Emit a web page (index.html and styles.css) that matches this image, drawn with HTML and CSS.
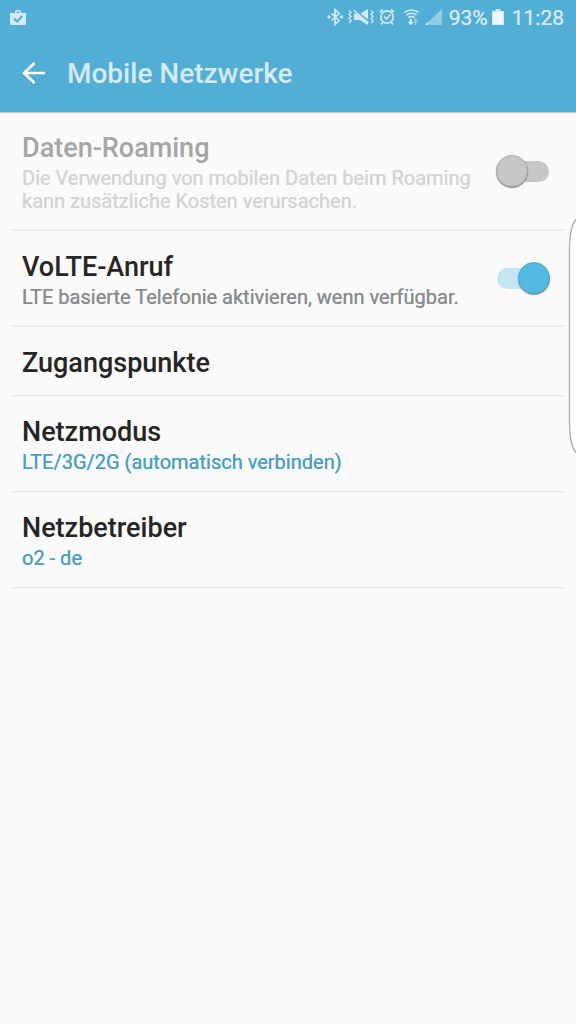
FILE: index.html
```html
<!DOCTYPE html>
<html lang="de">
<head>
<meta charset="utf-8">
<meta name="viewport" content="width=device-width, initial-scale=1">
<title>Mobile Netzwerke</title>
<link rel="stylesheet" href="styles.css">
</head>
<body>
<header class="top">
  <div class="status">
    <svg class="bag" width="18" height="18" viewBox="0 0 18 18" aria-hidden="true">
      <path class="ink" fill-rule="evenodd" d="M1 4h5V2.500Q6 1 7.500 1h3Q12 1 12 2.500V4h5v10.500q0 1.500-1.500 1.500h-13Q1 16 1 14.500zM7.500 2.500V4h3V2.500z"/>
      <path class="check" d="M5 9.500l3 3 5.500-5.500"/>
    </svg>
    <div class="status-right">
      <svg class="icons" width="122" height="20" viewBox="0 0 122 20" aria-hidden="true">
        <path class="line" d="M4.500 6.500l7.500 7-4 4V2.500l4 4-7.500 7"/>
        <path class="ink" d="M0 10l2-2 2 2-2 2zM12.500 10l2-2 2 2-2 2z"/>
        <path class="line thin" d="M22 3.500l2 2-2 2 2 2-2 2 2 2-1.500 2.500M44 3.500l2 2-2 2 2 2-2 2 2 2-1.500 2.500"/>
        <path class="ink" d="M27 6.500h3.500l10.500 8.500v3l-8.500-5H27zM33.500 6.500L41 2v10.500z"/>
        <path class="line thin" d="M26.500 3l15 13"/>
        <circle class="line" cx="60" cy="10" r="6.200"/>
        <path class="line" d="M57 9.500l2.500 2.500 4-4.500M53 5l3-2.500M67 5l-3-2.500M56 15l-2 2.500M64 15l2 2.500"/>
        <path class="line" d="M77.500 5.500q7-5 14 0M79.500 8q5-3.500 10 0M81.500 10.500q3-2 6 0"/>
        <path class="ink" d="M82.500 12h2.500v3h1.500l-2.750 3.500L81 15h1.500z"/>
        <path class="ink faint" d="M87.500 18v-3.500H86l2.500-3.500 2.500 3.500h-1.500V18z"/>
        <path class="ink faint" d="M98 18L115 2v16z"/>
        <path class="ink" d="M98 18l3-3v3z"/>
      </svg>
      <span class="charge">93%</span>
      <svg class="battery" width="12" height="18" viewBox="0 0 12 18" aria-hidden="true">
        <path class="ink" d="M3.500 1h5v2H12v14H0V3h3.500z"/>
        <path class="fill" d="M1 4h10v12H1z"/>
      </svg>
      <time class="clock">11:28</time>
    </div>
  </div>
  <div class="bar">
    <button class="back" type="button" aria-label="Zurück">
      <svg width="24" height="24" viewBox="0 0 24 24" aria-hidden="true"><path d="M12.500 1L2 11l10.500 10M2 11h21"/></svg>
    </button>
    <h1 class="heading">Mobile Netzwerke</h1>
  </div>
</header>
<main class="list">
  <div class="row soft disabled">
    <label class="text" for="roaming">
      <span class="name">Daten-Roaming</span>
      <span class="note">Die Verwendung von mobilen Daten beim Roaming kann zusätzliche Kosten verursachen.</span>
    </label>
    <input class="switch" id="roaming" type="checkbox" role="switch" disabled>
  </div>
  <div class="row soft">
    <label class="text" for="volte">
      <span class="name">VoLTE-Anruf</span>
      <span class="note">LTE basierte Telefonie aktivieren, wenn verfügbar.</span>
    </label>
    <input class="switch" id="volte" type="checkbox" role="switch" checked>
  </div>
  <button class="row single" type="button">
    <span class="text"><span class="name">Zugangspunkte</span></span>
  </button>
  <button class="row" type="button">
    <span class="text"><span class="name">Netzmodus</span><span class="note value">LTE/3G/2G (automatisch verbinden)</span></span>
  </button>
  <button class="row" type="button">
    <span class="text"><span class="name">Netzbetreiber</span><span class="note value">o2 - de</span></span>
  </button>
</main>
<button class="edge" type="button" aria-label="Seitenleiste">
  <svg width="8" height="236" viewBox="0 0 8 236" aria-hidden="true"><path d="M8.500 1Q1.500 8 1.500 32V204Q1.500 228 8.500 235"/></svg>
</button>
</body>
</html>
```
FILE: styles.css
```css
*,
*::before,
*::after {
  box-sizing: border-box;
}

body {
  margin: 0;
  min-height: 100vh;
  position: relative;
  background: #fafafa;
  color: #252525;
  font-family: Roboto, "Liberation Sans", sans-serif;
  font-weight: 500;
}

button {
  border: 0;
  padding: 0;
  background: none;
  font: inherit;
  color: inherit;
  text-align: left;
}

svg {
  display: block;
}

.top {
  background: #52aed5;
  color: #d5eaf3;
  box-shadow: 0 1px 1px #c4c4c4;
}

.status {
  display: flex;
  justify-content: space-between;
  align-items: center;
  height: 36px;
  padding: 0 12px 0 9px;
}

.status-right {
  display: flex;
  align-items: center;
  font-size: 21px;
  font-weight: 400;
  line-height: 36px;
  text-shadow: 0 0 currentColor;
}

.icons {
  margin-bottom: 2px;
}

.battery {
  margin: 0 8px 2px 4px;
}

.ink {
  fill: #d5eaf3;
}

.fill {
  fill: #eef4f7;
}

.faint {
  opacity: 0.5;
}

.line {
  fill: none;
  stroke: #d5eaf3;
  stroke-width: 1.7;
}

.thin {
  stroke-width: 1.3;
}

.check {
  fill: none;
  stroke: #52aed5;
  stroke-width: 2;
}

.bar {
  display: flex;
  align-items: center;
  gap: 21px;
  height: 76px;
  padding: 0 22px;
}

.back path {
  fill: none;
  stroke: #fff;
  stroke-width: 2.6;
}

.heading {
  margin: 0;
  font-size: 28px;
  font-weight: 500;
  line-height: 32px;
}

.list {
  padding: 0 13px;
}

.row {
  display: flex;
  align-items: center;
  gap: 20px;
  width: 100%;
  padding: 20px 12px 17px 9px;
  border-bottom: 1px solid #dedede;
}

.soft {
  padding-bottom: 16px;
  border-bottom: 2px solid #ececec;
}

.single {
  padding-bottom: 16px;
}

.text {
  display: flex;
  flex: 1;
  flex-direction: column;
  gap: 3px;
}

.name {
  font-size: 27px;
  line-height: 32px;
}

.note {
  color: #898c8e;
  font-size: 20px;
  font-weight: 400;
  line-height: 23px;
  text-shadow: 0 0 currentColor;
}

.value {
  color: #4aa1c3;
}

.disabled .name {
  color: #a5a6a6;
}

.disabled .note {
  color: #d3d4d4;
}

.switch {
  appearance: none;
  display: flex;
  align-items: center;
  flex: none;
  position: relative;
  isolation: isolate;
  width: 54px;
  height: 32px;
  margin: 0 1px 4px 0;
}

.switch::before {
  content: "";
  width: 32px;
  height: 32px;
  border: 1px solid #aaa;
  border-radius: 50%;
  background: #c7c7c7;
  box-shadow: 0 1px 1px #888;
}

.switch::after {
  content: "";
  position: absolute;
  z-index: -1;
  inset: 6px 1px 5px 1px;
  border-radius: 11px;
  background: #c7c7c7;
}

.switch:checked {
  justify-content: flex-end;
}

.switch:checked::before {
  border-color: #4bacd1;
  background: #53b9e0;
}

.switch:checked::after {
  background: #c2e5f1;
}

.edge {
  position: absolute;
  top: 218px;
  right: 0;
}

.edge path {
  fill: #fff;
  stroke: #aaa;
  stroke-width: 1.3;
}
```
